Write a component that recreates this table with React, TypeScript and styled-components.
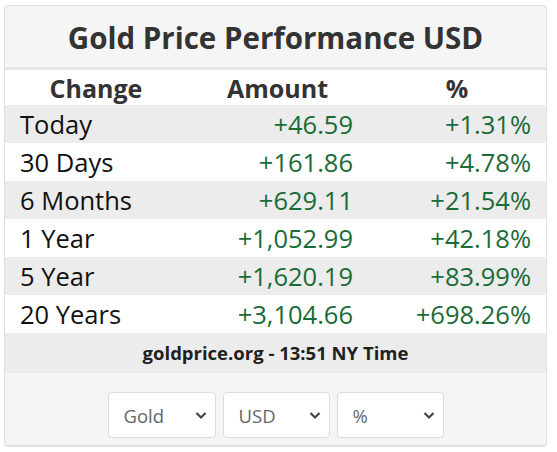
import React from "react";
import styled, { createGlobalStyle } from "styled-components";

const GlobalStyle = createGlobalStyle`
  html, body {
    margin: 0;
    padding: 0;
    background: #ffffff;
    font-family: "Open Sans", "Liberation Sans", sans-serif;
  }
`;

interface PerfRow {
  label: string;
  amount: string;
  percent: string;
}

const rows: PerfRow[] = [
  { label: "Today", amount: "+46.59", percent: "+1.31%" },
  { label: "30 Days", amount: "+161.86", percent: "+4.78%" },
  { label: "6 Months", amount: "+629.11", percent: "+21.54%" },
  { label: "1 Year", amount: "+1,052.99", percent: "+42.18%" },
  { label: "5 Year", amount: "+1,620.19", percent: "+83.99%" },
  { label: "20 Years", amount: "+3,104.66", percent: "+698.26%" },
];

const Card = styled.div`
  margin: 5px 0 0 4px;
  width: 543px;
  box-sizing: border-box;
  border: 1px solid #e0e0e0;
  border-bottom: 2px solid #e2e2e2;
  border-radius: 4px;
  background: #f5f5f5;
  overflow: hidden;
`;

const Title = styled.h2`
  margin: 0;
  height: 61px;
  line-height: 64px;
  text-align: center;
  font-size: 29.5px;
  font-weight: 700;
  color: #333333;
  border-bottom: 3px solid #e6e6e6;
`;

const Table = styled.div`
  display: grid;
  grid-template-columns: 182px 181px 1fr;
`;

const HeadCell = styled.div`
  height: 35px;
  line-height: 36px;
  background: #ffffff;
  text-align: center;
  font-size: 25px;
  font-weight: 700;
  color: #333333;
`;

const Cell = styled.div<{ $striped: boolean; $align: "left" | "right"; $green?: boolean }>`
  height: 38px;
  line-height: 38px;
  padding: 0 15px;
  background: ${(p) => (p.$striped ? "#ececec" : "#ffffff")};
  text-align: ${(p) => p.$align};
  font-size: 25.5px;
  color: ${(p) => (p.$green ? "#196b37" : "#111111")};
`;

const Footer = styled.div`
  height: 40px;
  line-height: 40px;
  background: #ececec;
  text-align: center;
  font-size: 18.5px;
  font-weight: 700;
  color: #1f1f1f;
`;

const Controls = styled.div`
  display: flex;
  justify-content: center;
  gap: 7px;
  padding: 19px 0 7px;
`;

const SelectWrap = styled.div<{ $width: number }>`
  position: relative;
  width: ${(p) => p.$width}px;
  height: 46px;
`;

const Select = styled.select`
  appearance: none;
  width: 100%;
  height: 100%;
  box-sizing: border-box;
  border: 1px solid #dcdcdc;
  border-radius: 4px;
  background: #ffffff;
  padding: 0 0 0 15px;
  font-family: "Open Sans", "Liberation Sans", sans-serif;
  font-size: 18.5px;
  color: #666666;
  outline: none;
`;

const Chevron = styled.svg`
  position: absolute;
  right: 9px;
  top: 19px;
  pointer-events: none;
`;

function Dropdown({ width, options }: { width: number; options: string[] }) {
  return (
    <SelectWrap $width={width}>
      <Select defaultValue={options[0]}>
        {options.map((o) => (
          <option key={o}>{o}</option>
        ))}
      </Select>
      <Chevron width="12" height="9" viewBox="0 0 12 9">
        <path d="M1.5 2 L6 6.5 L10.5 2" fill="none" stroke="#444" strokeWidth="2.2" />
      </Chevron>
    </SelectWrap>
  );
}

export default function App() {
  return (
    <>
      <GlobalStyle />
      <Card>
        <Title>Gold Price Performance USD</Title>
        <Table>
          <HeadCell>Change</HeadCell>
          <HeadCell>Amount</HeadCell>
          <HeadCell>%</HeadCell>
          {rows.map((r, i) => (
            <React.Fragment key={r.label}>
              <Cell $striped={i % 2 === 0} $align="left">
                {r.label}
              </Cell>
              <Cell $striped={i % 2 === 0} $align="right" $green>
                {r.amount}
              </Cell>
              <Cell $striped={i % 2 === 0} $align="right" $green>
                {r.percent}
              </Cell>
            </React.Fragment>
          ))}
        </Table>
        <Footer>goldprice.org - 13:51 NY Time</Footer>
        <Controls>
          <Dropdown width={108} options={["Gold", "Silver"]} />
          <Dropdown width={107} options={["USD", "EUR", "GBP"]} />
          <Dropdown width={107} options={["%", "Amount"]} />
        </Controls>
      </Card>
    </>
  );
}
